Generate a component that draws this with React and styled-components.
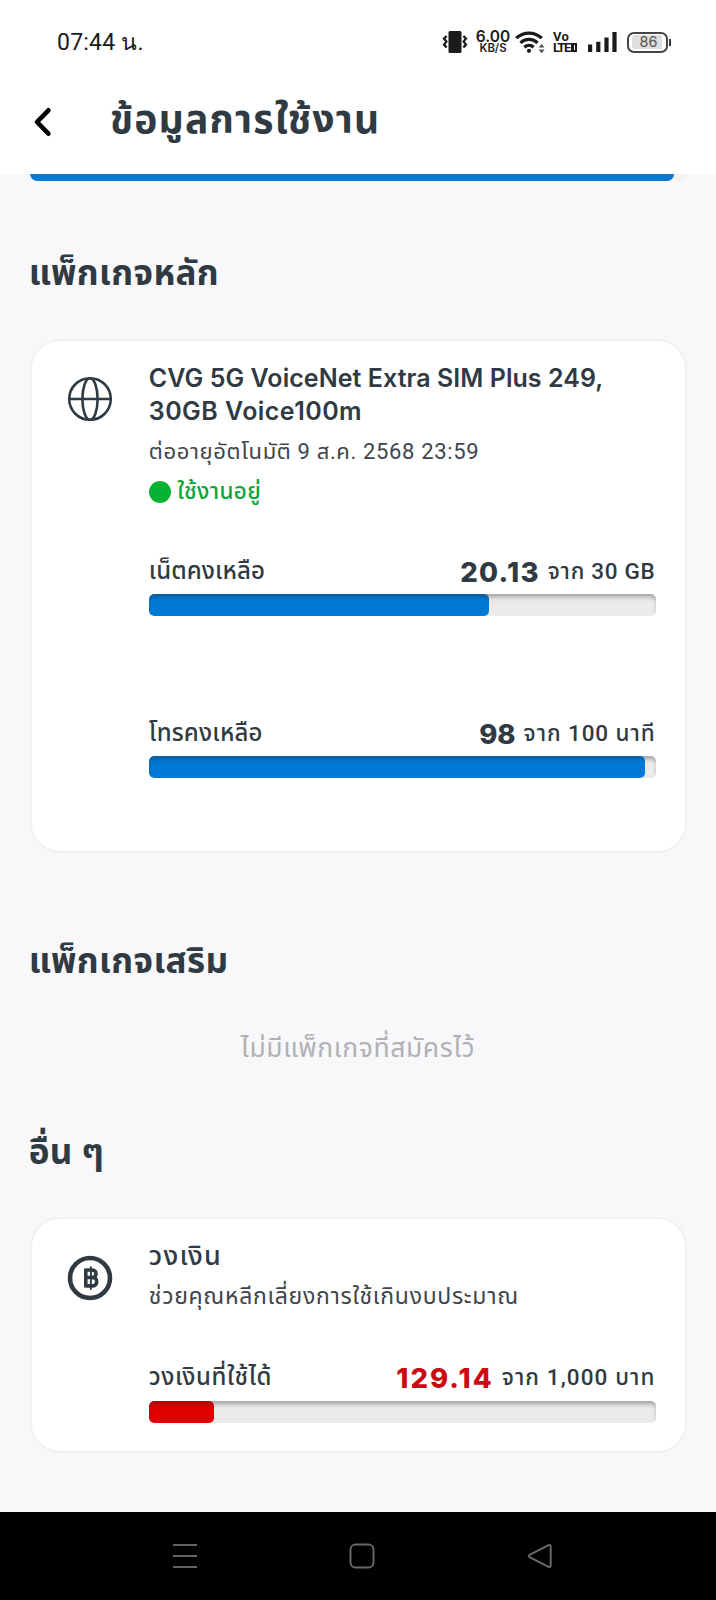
import React from 'react';
import styled, { createGlobalStyle } from 'styled-components';

const ink = '#303a43';

const GlobalStyle = createGlobalStyle`
  * { box-sizing: border-box; }
  body {
    margin: 0;
    background: #f8f8fb;
    color: ${ink};
    font-family: Inter, "Noto Sans Thai", "Noto Sans", sans-serif;
  }
  h1, h2, h3, p { margin: 0; white-space: nowrap; }
  svg { display: block; }
`;

const Screen = styled.div`
  width: 716px;
  height: 1600px;
  display: flex;
  flex-direction: column;
  overflow: hidden;
`;

/* ---------- status bar ---------- */

const StatusBar = styled.div`
  height: 84px;
  padding: 0 45px 0 56px;
  display: flex;
  justify-content: space-between;
  align-items: center;
  background: #fff;
  color: #1b1b1b;
  flex: none;
`;

const Clock = styled.span`
  font: 400 23px/30px Roboto, sans-serif;
  letter-spacing: 0.2px;
  padding: 1px 0 0 1px;
`;

const StatusIcons = styled.div`
  display: flex;
  align-items: center;
`;

const NetSpeed = styled.div`
  width: 38px;
  margin: 1px 3px 0 6px;
  display: flex;
  flex-direction: column;
  align-items: center;
  font-weight: 600;
`;

const SpeedValue = styled.span`
  font-size: 15.5px;
  line-height: 12px;
`;

const SpeedUnit = styled.span`
  font-size: 11.3px;
  line-height: 11px;
`;

const VolteMark = styled.div`
  width: 25px;
  margin: 1px 10px 0 8px;
  display: flex;
  flex-direction: column;
  font: 700 13px/10px Roboto, sans-serif;
`;

const VolteRow = styled.div`
  display: flex;
  align-items: center;
  height: 10.5px;
  letter-spacing: ${(p) => p.$spacing || 0}px;
`;

const SimBadge = styled.span`
  width: 6px;
  height: 9px;
  margin-left: 1px;
  border: 2.4px solid #1b1b1b;
  border-width: 2px 2px 2px 3px;
`;

const Battery = styled.div`
  width: 41px;
  height: 21px;
  margin-left: 10px;
  padding: 1.5px 2.5px;
  border: 2px solid #444;
  border-radius: 7px;
`;

const BatteryLevel = styled.div`
  width: 30px;
  height: 100%;
  border-radius: 3px 0 0 3px;
  background: #dedede;
  color: #555;
  font-size: 14.5px;
  line-height: 14px;
  padding-left: 8px;
`;

const BatteryTip = styled.div`
  width: 2px;
  height: 7px;
  margin-left: 1px;
  background: #333;
`;

/* ---------- header ---------- */

const Header = styled.header`
  height: 90px;
  padding: 0 0 0 31px;
  display: flex;
  background: #fff;
  flex: none;
`;

const BackButton = styled.button`
  width: 22px;
  height: 32px;
  margin: 22px 57px 0 0;
  padding: 0;
  border: 0;
  background: none;
`;

const PageTitle = styled.h1`
  margin-top: 9.5px;
  font-size: 39px;
  line-height: 50px;
  font-weight: 700;
  letter-spacing: 1.2px;
`;

/* ---------- content ---------- */

const Content = styled.main`
  flex: 1;
  padding: 0 29.5px;
`;

const ClippedTrack = styled.div`
  height: 6.5px;
  border-radius: 0 0 7px 7px;
  background: #f1f1f4;
  overflow: hidden;
`;

const ClippedFill = styled.div`
  width: 644px;
  height: 100%;
  border-radius: 0 0 7px 7px;
  background: #0778cf;
`;

const SectionTitle = styled.h2`
  margin: ${(p) => p.$top}px 0 ${(p) => p.$bottom}px -0.8px;
  font-size: 35px;
  line-height: 50px;
  font-weight: 700;
  letter-spacing: 0.35px;
`;

const EmptyNote = styled.p`
  text-align: center;
  color: #b0b1b5;
  font-size: 26.5px;
  line-height: 40px;
  letter-spacing: 0.6px;
`;

const Card = styled.section`
  display: grid;
  grid-template-columns: 117.3px 1fr;
  padding: ${(p) => p.$top}px 29px ${(p) => p.$bottom}px 0;
  border: 2px solid #f1f1f4;
  border-radius: 30px;
  background: #fff;
`;

const CardIcon = styled.div`
  margin-top: ${(p) => p.$top}px;
  padding-left: 35.5px;
`;

const CardTitle = styled.h3`
  padding-top: 1px;
  font-size: ${(p) => (p.$thai ? 27 : 25)}px;
  line-height: ${(p) => (p.$thai ? 36 : 33)}px;
  font-weight: ${(p) => (p.$thai ? 500 : 600)};
  letter-spacing: ${(p) => (p.$thai ? 1.2 : 0.05)}px;
`;

const TitleTail = styled.span`
  display: block;
  letter-spacing: 0.45px;
`;

const Subtitle = styled.p`
  margin-top: ${(p) => p.$top}px;
  color: #40454b;
  font-family: Roboto, "Noto Sans Thai", sans-serif;
  font-size: ${(p) => p.$size}px;
  line-height: ${(p) => p.$line}px;
  letter-spacing: ${(p) => p.$spacing}px;
`;

const ActiveStatus = styled.div`
  height: 38px;
  display: flex;
  align-items: center;
  gap: 6.5px;
  color: #0ba53a;
  font-size: 22.5px;
  line-height: 38px;
  font-weight: 500;
  letter-spacing: 0.35px;
  padding-top: 2px;
`;

const Dot = styled.span`
  width: 22px;
  height: 22px;
  margin-top: 2px;
  border-radius: 50%;
  background: #06b233;
`;

const Meter = styled.div`
  margin-top: ${(p) => p.$top}px;
`;

const MeterHead = styled.div`
  height: 36px;
  padding-top: 1.5px;
  margin-bottom: 6px;
  display: flex;
  align-items: center;
  line-height: 36px;
  white-space: nowrap;
`;

const MeterLabel = styled.span`
  flex: 1;
  font-size: 24px;
  font-weight: 500;
  letter-spacing: ${(p) => p.$spacing}px;
`;

const MeterValue = styled.span`
  padding-top: 2px;
  font-size: 27.5px;
  font-weight: 800;
  letter-spacing: ${(p) => p.$spacing}px;
  color: ${(p) => (p.$low ? '#cc0a12' : ink)};
`;

const MeterTotal = styled.span`
  margin-left: 8px;
  font-family: Roboto, "Noto Sans Thai", sans-serif;
  font-size: 22.5px;
  font-weight: 500;
  letter-spacing: ${(p) => p.$spacing}px;
`;

const Track = styled.div`
  position: relative;
  height: 22px;
  border-radius: 5px;
  background: #ebebee;
  overflow: hidden;

  &::after {
    content: '';
    position: absolute;
    inset: 0;
    border-radius: 5px;
    box-shadow: inset 0 4px 4px -1px rgba(40, 40, 40, 0.36);
  }
`;

const Fill = styled.div`
  height: 100%;
  border-radius: 5px;
  background: ${(p) => (p.$low ? '#e00000' : '#0079d6')};
`;

/* ---------- system navigation ---------- */

const NavBar = styled.nav`
  height: 88px;
  display: flex;
  padding: 0 0 0 171.5px;
  align-items: center;
  gap: 151.5px;
  background: #000;
  flex: none;
`;

function UsageMeter({ top, label, labelSpacing, value, valueSpacing, total, totalSpacing, percent, low }) {
  return (
    <Meter $top={top}>
      <MeterHead>
        <MeterLabel $spacing={labelSpacing}>{label}</MeterLabel>
        <MeterValue $low={low} $spacing={valueSpacing}>{value}</MeterValue>
        <MeterTotal $spacing={totalSpacing}>{total}</MeterTotal>
      </MeterHead>
      <Track>
        <Fill $low={low} style={{ width: `${percent}%` }} />
      </Track>
    </Meter>
  );
}

const VibrateIcon = () => (
  <svg width="26" height="24" viewBox="0 0 26 24">
    <rect x="6.5" y="1" width="13" height="22" rx="1.5" fill="#1b1b1b" />
    <path d="M4.6 6 2 8.6 4.4 11.6 2 14.6 4.6 17.5M21.4 6 24 8.6 21.6 11.6 24 14.6 21.4 17.5" fill="none" stroke="#1b1b1b" strokeWidth="2.3" />
  </svg>
);

const WifiIcon = () => (
  <svg width="30" height="24" viewBox="0 0 30 24">
    <g fill="none" stroke="#1b1b1b" strokeWidth="3.2">
      <path d="M1.2 8.2a18.5 18.5 0 0 1 25.6 0" />
      <path d="M5.4 12.8a12.6 12.6 0 0 1 17.2 0" />
      <path d="M9.4 17.2a6.8 6.8 0 0 1 9.2 0" />
    </g>
    <circle cx="14" cy="20.8" r="2.1" fill="#1b1b1b" />
    <path d="M23.6 17.6 26.6 14l3 3.6zM23.6 19.6h6L26.6 23.2z" fill="#555" />
  </svg>
);

const SignalIcon = () => (
  <svg width="29" height="22" viewBox="0 0 29 22">
    <path d="M0 13.5h4.2V21H0zM8.2 10.8h4.2V21H8.2zM16.4 6.5h4.2V21h-4.2zM24.4 1h4.2v20h-4.2z" fill="#1b1b1b" />
  </svg>
);

const GlobeIcon = () => (
  <svg width="46" height="46" viewBox="0 0 46 46" fill="none" stroke={ink} strokeWidth="2.6">
    <circle cx="23" cy="23" r="20.8" />
    <ellipse cx="23" cy="23" rx="7.6" ry="20.8" />
    <path d="M2 23h42" />
  </svg>
);

const BahtIcon = () => (
  <svg width="46" height="46" viewBox="0 0 46 46" fill="none" stroke={ink}>
    <circle cx="23" cy="23" r="20" strokeWidth="4.6" />
    <path d="M18.8 15h5.6c3.4 0 4.6 1.6 4.6 3.7 0 2.3-1.6 3.8-4.2 3.8h-6M24.8 22.5c3.4 0 4.9 1.8 4.9 4.2 0 2.7-1.8 4.2-4.9 4.2h-6M18.8 13.4v19.1" strokeWidth="3.6" />
    <path d="M23.9 11.4v23.4" strokeWidth="1.9" />
  </svg>
);

export default function App() {
  return (
    <Screen>
      <GlobalStyle />
      <StatusBar>
        <Clock>07:44 น.</Clock>
        <StatusIcons>
          <VibrateIcon />
          <NetSpeed>
            <SpeedValue>6.00</SpeedValue>
            <SpeedUnit>KB/S</SpeedUnit>
          </NetSpeed>
          <WifiIcon />
          <VolteMark>
            <VolteRow $spacing={0.3}>Vo</VolteRow>
            <VolteRow $spacing={-1.3}>
              LTE
              <SimBadge />
            </VolteRow>
          </VolteMark>
          <SignalIcon />
          <Battery>
            <BatteryLevel>86</BatteryLevel>
          </Battery>
          <BatteryTip />
        </StatusIcons>
      </StatusBar>

      <Header>
        <BackButton aria-label="ย้อนกลับ">
          <svg width="22" height="32" viewBox="0 0 22 32">
            <path d="M17.4 4.3 6 16l11.4 11.7" fill="none" stroke="#000" strokeWidth="4.6" strokeLinecap="round" strokeLinejoin="round" />
          </svg>
        </BackButton>
        <PageTitle>ข้อมูลการใช้งาน</PageTitle>
      </Header>

      <Content>
        <ClippedTrack>
          <ClippedFill />
        </ClippedTrack>

        <SectionTitle $top={66.5} $bottom={42}>แพ็กเกจหลัก</SectionTitle>
        <Card $top={20} $bottom={73}>
          <CardIcon $top={15}>
            <GlobeIcon />
          </CardIcon>
          <div>
            <CardTitle>
              CVG 5G VoiceNet Extra SIM Plus 249,
              <TitleTail>30GB Voice100m</TitleTail>
            </CardTitle>
            <Subtitle $top={5} $size={22} $line={38} $spacing={0.65}>
              ต่ออายุอัตโนมัติ 9 ส.ค. 2568 23:59
            </Subtitle>
            <ActiveStatus>
              <Dot />
              ใช้งานอยู่
            </ActiveStatus>
            <UsageMeter top={43} label="เน็ตคงเหลือ" labelSpacing={0.1} value="20.13" valueSpacing={1.3} total="จาก 30 GB" totalSpacing={0.7} percent={67.1} />
            <UsageMeter top={98} label="โทรคงเหลือ" labelSpacing={0.2} value="98" valueSpacing={0} total="จาก 100 นาที" totalSpacing={0.9} percent={98} />
          </div>
        </Card>

        <SectionTitle $top={82} $bottom={42}>แพ็กเกจเสริม</SectionTitle>
        <EmptyNote>ไม่มีแพ็กเกจที่สมัครไว้</EmptyNote>

        <SectionTitle $top={59} $bottom={41}>อื่น ๆ</SectionTitle>
        <Card $top={17.5} $bottom={28.5}>
          <CardIcon $top={18}>
            <BahtIcon />
          </CardIcon>
          <div>
            <CardTitle $thai>วงเงิน</CardTitle>
            <Subtitle $top={3} $size={23} $line={40} $spacing={0.7}>
              ช่วยคุณหลีกเลี่ยงการใช้เกินงบประมาณ
            </Subtitle>
            <UsageMeter top={42} label="วงเงินที่ใช้ได้" labelSpacing={0.6} value="129.14" valueSpacing={2} total="จาก 1,000 บาท" totalSpacing={1.1} percent={12.91} low />
          </div>
        </Card>
      </Content>

      <NavBar>
        <svg width="26" height="26" viewBox="0 0 26 26" stroke="#636363" strokeWidth="2">
          <path d="M1 2h24M1 13h24M1 24h24" />
        </svg>
        <svg width="26" height="26" viewBox="0 0 26 26" fill="none" stroke="#6a6a6a" strokeWidth="1.9">
          <rect x="1.5" y="1.5" width="23" height="23" rx="5" />
        </svg>
        <svg width="26" height="26" viewBox="0 0 26 26" fill="none" stroke="#6a6a6a" strokeWidth="1.9" strokeLinejoin="round">
          <path d="M21.5 2.2 2.6 11.8q-2 1.2 0 2.4l18.9 9.6q2 .8 2.2-1.4V3.6q-.2-2.2-2.2-1.4z" />
        </svg>
      </NavBar>
    </Screen>
  );
}
